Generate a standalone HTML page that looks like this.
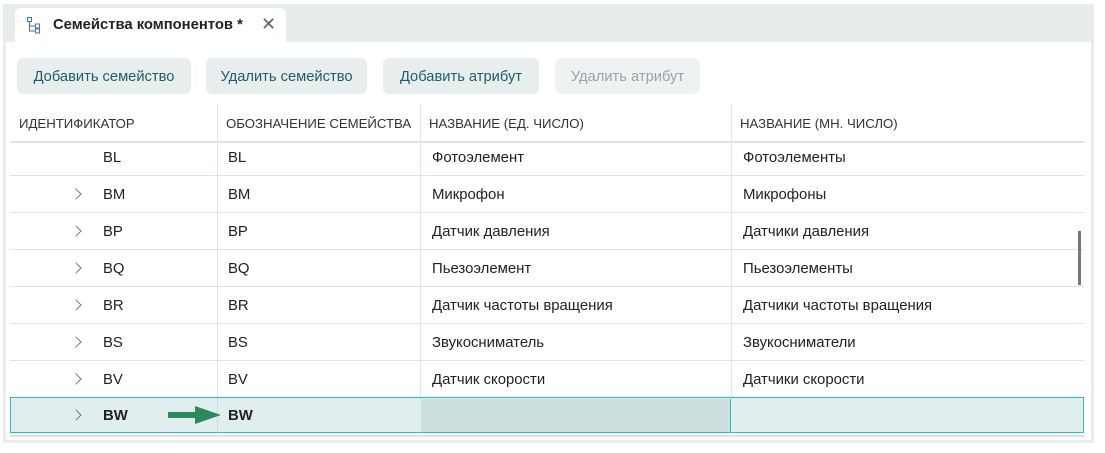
<!DOCTYPE html>
<html><head><meta charset="utf-8"><style>
*{margin:0;padding:0;box-sizing:border-box}
body{width:1105px;height:453px;background:#fff;font-family:"Liberation Sans",sans-serif;position:relative;overflow:hidden;color:#222}
.frame{position:absolute;left:3px;top:4px;width:1091px;height:439px;background:#e7ecec}
.panel{position:absolute;left:6px;top:42px;width:1085px;height:398px;background:#fff}
.tab{position:absolute;left:15px;top:8px;width:271px;height:35px;background:#fff;border-radius:6px 6px 0 0}
.tab .t{position:absolute;left:38px;top:9px;font-size:14.8px;font-weight:bold;color:#222}
.tab .x{position:absolute;left:246px;top:6px;font-size:18px;color:#666}
.btn{position:absolute;top:58px;height:36px;background:#e8eded;border-radius:6px;font-size:14.7px;color:#1d5e66;text-align:center;line-height:38px}
.btn.dis{background:#eff2f2;color:#9aa3a5}
.h{position:absolute;top:116px;font-size:13.2px;color:#333}
.cell{position:absolute;font-size:14.9px;color:#222;margin-top:2px}
.hl{position:absolute;left:10px;width:1074px;height:1px;background:#dde6e6}
.vl{position:absolute;width:1px;background:#dde6e6}
.chev{position:absolute;left:72px;width:8px;height:8px;border-right:1.3px solid #777;border-top:1.3px solid #777;transform:rotate(45deg)}
</style></head><body>
<div class="frame"></div>
<div class="tab">
<svg style="position:absolute;left:11px;top:8px" width="16" height="18" viewBox="0 0 16 18"><rect x="1.5" y="1.5" width="4" height="4" fill="none" stroke="#3a7dc9"/><path d="M3.5 6v9h6M3.5 10h6" fill="none" stroke="#666"/><rect x="9.5" y="8" width="4" height="4" fill="none" stroke="#3a7dc9"/><rect x="9.5" y="13" width="4" height="4" fill="none" stroke="#3a7dc9"/></svg>
<span class="t">Семейства компонентов *</span><span class="x">✕</span></div>
<div class="panel"></div>
<div class="btn" style="left:17px;width:174px">Добавить семейство</div>
<div class="btn" style="left:206px;width:161px">Удалить семейство</div>
<div class="btn" style="left:383px;width:156px">Добавить атрибут</div>
<div class="btn dis" style="left:555px;width:145px">Удалить атрибут</div>

<div class="vl" style="left:217px;top:104px;height:330px"></div>
<div class="vl" style="left:420px;top:104px;height:330px"></div>
<div class="vl" style="left:731px;top:104px;height:330px"></div>
<div class="h" style="left:19px">ИДЕНТИФИКАТОР</div>
<div class="h" style="left:226px">ОБОЗНАЧЕНИЕ СЕМЕЙСТВА</div>
<div class="h" style="left:429px">НАЗВАНИЕ (ЕД. ЧИСЛО)</div>
<div class="h" style="left:740px">НАЗВАНИЕ (МН. ЧИСЛО)</div>
<div class="hl" style="top:141px;height:2px"></div>
<div class="hl" style="top:175px"></div><div class="hl" style="top:212px"></div><div class="hl" style="top:249px"></div><div class="hl" style="top:286px"></div><div class="hl" style="top:323px"></div><div class="hl" style="top:360px"></div>
<div class="hl" style="top:435px;height:2px"></div>

<div class="cell" style="left:103px;top:148px">BL</div><div class="cell" style="left:228px;top:148px">BL</div><div class="cell" style="left:432px;top:148px">Фотоэлемент</div><div class="cell" style="left:743px;top:148px">Фотоэлементы</div>
<div class="chev" style="top:190px"></div><div class="cell" style="left:103px;top:185px">BM</div><div class="cell" style="left:228px;top:185px">BM</div><div class="cell" style="left:432px;top:185px">Микрофон</div><div class="cell" style="left:743px;top:185px">Микрофоны</div>
<div class="chev" style="top:227px"></div><div class="cell" style="left:103px;top:222px">BP</div><div class="cell" style="left:228px;top:222px">BP</div><div class="cell" style="left:432px;top:222px">Датчик давления</div><div class="cell" style="left:743px;top:222px">Датчики давления</div>
<div class="chev" style="top:264px"></div><div class="cell" style="left:103px;top:259px">BQ</div><div class="cell" style="left:228px;top:259px">BQ</div><div class="cell" style="left:432px;top:259px">Пьезоэлемент</div><div class="cell" style="left:743px;top:259px">Пьезоэлементы</div>
<div class="chev" style="top:301px"></div><div class="cell" style="left:103px;top:296px">BR</div><div class="cell" style="left:228px;top:296px">BR</div><div class="cell" style="left:432px;top:296px">Датчик частоты вращения</div><div class="cell" style="left:743px;top:296px">Датчики частоты вращения</div>
<div class="chev" style="top:338px"></div><div class="cell" style="left:103px;top:333px">BS</div><div class="cell" style="left:228px;top:333px">BS</div><div class="cell" style="left:432px;top:333px">Звукосниматель</div><div class="cell" style="left:743px;top:333px">Звукосниматели</div>
<div class="chev" style="top:375px"></div><div class="cell" style="left:103px;top:370px">BV</div><div class="cell" style="left:228px;top:370px">BV</div><div class="cell" style="left:432px;top:370px">Датчик скорости</div><div class="cell" style="left:743px;top:370px">Датчики скорости</div>

<div style="position:absolute;left:10px;top:397px;width:1074px;height:36px;background:#e0eeee;border:1.5px solid #2bbcbc"></div>
<div style="position:absolute;left:421px;top:398.5px;width:310px;height:33px;background:#cde0df;border-right:1px solid #2bbcbc"></div>
<div class="vl" style="left:217px;top:398px;height:34px;background:#c9dcdc"></div>
<div class="chev" style="top:411px"></div>
<div class="cell" style="left:103px;top:406px;font-weight:bold">BW</div>
<div class="cell" style="left:228px;top:406px;font-weight:bold">BW</div>
<svg style="position:absolute;left:167px;top:405px" width="56" height="20"><path d="M1 7h27V1l26 9-26 9v-6H1z" fill="#2a8c5a"/></svg>
<div style="position:absolute;left:1078px;top:231px;width:3px;height:54px;background:#777"></div>
</body></html>
